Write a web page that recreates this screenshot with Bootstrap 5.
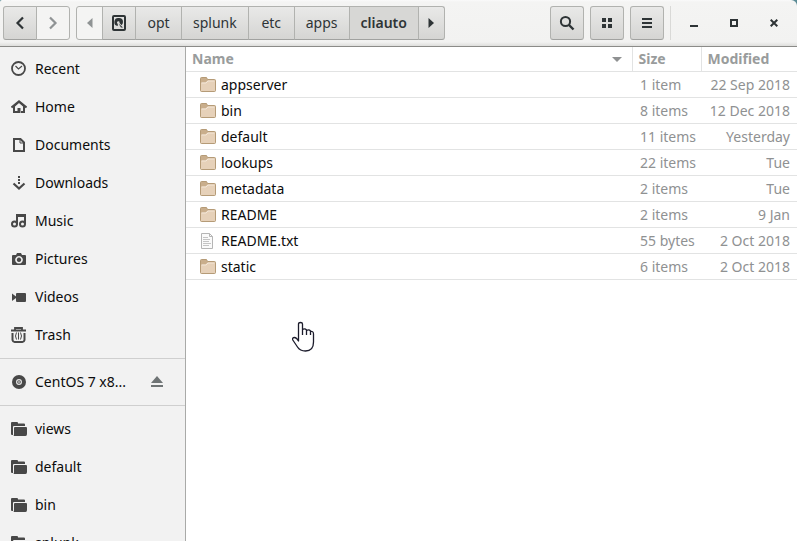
<!DOCTYPE html>
<html lang="en">
<head>
<meta charset="utf-8">
<meta name="viewport" content="width=device-width, initial-scale=1">
<title>cliauto</title>
<link href="https://cdn.jsdelivr.net/npm/bootstrap@5.3.0/dist/css/bootstrap.min.css" rel="stylesheet">
<style>
body { font-family: "Noto Sans", "Open Sans", sans-serif; font-size: 14px; line-height: 20px; color: #0c0c0c; background: #5a8b95; }
svg { display: block; flex: none; }
.titlebar { height: 47px; padding: 0 3px; color: #2e3436; background: linear-gradient(#fafafa, #f4f4f3 2px, #f2f2f1 42px, #dededc 46px); border-bottom: 1px solid #8b8b88; border-radius: 2px 6px 0 0; }
.tool { --bs-btn-padding-x: 0; --bs-btn-padding-y: 0; --bs-btn-font-size: 14px; --bs-btn-line-height: 20px; --bs-btn-border-radius: 3px; --bs-btn-border-color: #b1b2af; --bs-btn-color: #2e3436; --bs-btn-hover-color: #2e3436; --bs-btn-hover-border-color: #a1a2a0;
  display: flex; align-items: center; justify-content: center; height: 34px; width: 34px; background: linear-gradient(#e9e9e8, #d5d5d3); border-bottom-color: #a1a2a0; }
.tool.off { color: #8f9394; background: #f4f4f3; border-color: #b1b2af; opacity: 1; }
.tool.seg { width: auto; min-width: 47px; padding: 0 11px; }
.tool.arrow { width: 27px; }
.tool.here { background: #d7d7d5; font-weight: 600; }
.trail { margin-left: 6px; }
.actions { gap: 6px; }
.rule { width: 1px; height: 34px; margin-right: 3px; background: #d9d9d7; }
.win { width: 40px; height: 34px; border: 0; background: none; color: inherit; display: flex; align-items: center; justify-content: center; padding: 0; }
.places { width: 186px; background: #f2f2f2; border-right: 1px solid #a9aaa8; padding-top: 3px; }
.place { display: flex; align-items: center; gap: 8px; height: 38px; flex: none; padding: 0 22px 0 11px; color: inherit; text-decoration: none; }
.place svg { color: #484848; }
.eject { border: 0; background: none; padding: 0; width: 12px; }
.place .eject svg { color: #6f7475; }
.places hr { margin: 4px 0; border-top: 1px solid #cfcfcf; opacity: 1; flex: none; }
.files { --bs-table-bg: #fff; table-layout: fixed; margin: 0; }
.files th, .files td { height: 26px; padding: 2px 7px 0 8px; border-bottom: 1px solid #e2e3e3; color: #8f9192; vertical-align: middle; line-height: 20px; white-space: nowrap; }
.files th { height: 24px; padding: 1px 6px 0; color: #999c9c; border-right: 1px solid #e2e3e3; }
.files th:last-child { border-right: 0; }
.files td:first-child { color: #0c0c0c; padding-left: 14px; }
.entry { display: flex; align-items: center; gap: 5px; }
.size-col { width: 69px; }
.date-col { width: 96px; }
.hand { position: absolute; left: 106px; top: 274px; }
</style>
</head>
<body class="vh-100 d-flex flex-column overflow-hidden">
<svg width="0" height="0" class="position-absolute" aria-hidden="true">
  <symbol id="folder" viewBox="0 0 16 16">
    <path d="M.5 13.500V1.500Q.5.500 1.500.500H6.500L7.500 2.500H14.500Q15.500 2.500 15.500 3.500V13.500Q15.500 14.500 14.500 14.500H1.500Q.5 14.500.5 13.500Z" fill="#c9ae8c" stroke="#b59b77"/>
    <path d="M1 14V6.500Q1 5.500 2 5.500H5.500L7.500 3.500H15V14H1Z" fill="#e6d1b9"/>
    <path d="M1.500 6H6L8 4H14.500" fill="none" stroke="#f3e7d8"/>
  </symbol>
  <symbol id="bookmark" viewBox="0 0 16 14">
    <path d="M0 1Q0 0 1 0H6Q7 0 7 1V1.500H13Q14 1.500 14 2.500V4H3Q2 4 2 5V13H1Q0 13 0 12Z" fill="currentColor"/>
    <path d="M3 6Q3 5 4 5H15Q16 5 16 6V12Q16 14 14.500 14H2.500Q3 13.500 3 12Z" fill="currentColor"/>
  </symbol>
</svg>

<header class="titlebar d-flex align-items-center flex-shrink-0">
  <div class="btn-group" role="group" aria-label="History">
    <button type="button" class="btn tool" aria-label="Back"><svg width="16" height="16" viewBox="0 0 16 16" fill="none" stroke="currentColor" stroke-width="2.200"><path d="M11 2.500 5.500 8l5.500 5.500"/></svg></button>
    <button type="button" class="btn tool off" aria-label="Forward"><svg width="16" height="16" viewBox="0 0 16 16" fill="none" stroke="currentColor" stroke-width="2.200"><path d="M5 2.500 10.500 8 5 13.500"/></svg></button>
  </div>
  <nav class="btn-group trail" aria-label="Path">
    <button type="button" class="btn tool arrow off" aria-label="Scroll path left"><svg width="6" height="10" viewBox="0 0 6 10"><path d="M5.500 0v10L0 5z" fill="currentColor"/></svg></button>
    <button type="button" class="btn tool" aria-label="Disk"><svg width="14" height="16" viewBox="0 0 14 16"><rect x="1" y="1" width="12" height="14" rx="1" fill="none" stroke="currentColor" stroke-width="2"/><path fill="currentColor" d="M7 3a4 4 0 0 1 4 4q0 2-1.500 3.200L7.500 8a1.300 1.300 0 1 0-1.700.800V11A4 4 0 0 1 7 3zM6.500 8.500 11 12.500H9z"/></svg></button>
    <button type="button" class="btn tool seg">opt</button>
    <button type="button" class="btn tool seg">splunk</button>
    <button type="button" class="btn tool seg">etc</button>
    <button type="button" class="btn tool seg">apps</button>
    <button type="button" class="btn tool seg here" aria-current="page">cliauto</button>
    <button type="button" class="btn tool arrow" aria-label="Scroll path right"><svg width="6" height="10" viewBox="0 0 6 10"><path d="M.5 0v10L6 5z" fill="currentColor"/></svg></button>
  </nav>
  <div class="d-flex actions ms-auto">
    <button type="button" class="btn tool" aria-label="Search"><svg width="16" height="16" viewBox="0 0 16 16" fill="none" stroke="currentColor"><circle cx="6.500" cy="6.500" r="4.600" stroke-width="2"/><path d="m10 10 4.500 4.500" stroke-width="2.400"/></svg></button>
    <button type="button" class="btn tool" aria-label="Grid view"><svg width="10" height="10" viewBox="0 0 10 10" fill="currentColor"><path d="M0 0h4v4H0zM6 0h4v4H6zM0 6h4v4H0zM6 6h4v4H6z"/></svg></button>
    <button type="button" class="btn tool" aria-label="Menu"><svg width="10" height="10" viewBox="0 0 10 10" fill="currentColor"><path d="M0 0h10v2H0zM0 4h10v2H0zM0 8h10v2H0z"/></svg></button>
    <div class="rule"></div>
  </div>
  <div class="d-flex">
    <button type="button" class="win" aria-label="Minimize"><svg width="8" height="8" viewBox="0 0 8 8"><path d="M0 6h8v2H0z" fill="currentColor"/></svg></button>
    <button type="button" class="win" aria-label="Maximize"><svg width="8" height="8" viewBox="0 0 8 8"><path d="M1 1h6v6H1z" fill="none" stroke="currentColor" stroke-width="2"/></svg></button>
    <button type="button" class="win" aria-label="Close"><svg width="8" height="8" viewBox="0 0 8 8"><path d="m.7.7 6.600 6.600m0-6.600L.7 7.300" stroke="currentColor" stroke-width="2"/></svg></button>
  </div>
</header>

<div class="d-flex flex-grow-1 overflow-hidden">
  <nav class="places d-flex flex-column flex-shrink-0 overflow-hidden" aria-label="Places">
    <a class="place" href="#"><svg width="16" height="16" viewBox="0 0 16 16" fill="none" stroke="currentColor"><circle cx="7.500" cy="7.500" r="6.500" stroke-width="1.800"/><path d="M4.500 5 7.500 8l3.500-3" stroke-width="1.200"/></svg>Recent</a>
    <a class="place" href="#"><svg width="16" height="16" viewBox="0 0 16 16"><path d="M.5 8.500 8 2.300l7.500 6.200" fill="none" stroke="currentColor" stroke-width="2"/><path fill="currentColor" fill-rule="evenodd" d="M2 7 8 2l6 5v7H2zM4 7.500V12h2.500V9h3v5H10v-2h2V7.500L8 4z"/></svg>Home</a>
    <a class="place" href="#"><svg width="16" height="16" viewBox="0 0 16 16" fill="none" stroke="currentColor" stroke-width="2"><path d="M3 2h6.500L13 5.500V14H3z"/><path d="M9 2v4h4" stroke-width="1"/></svg>Documents</a>
    <a class="place" href="#"><svg width="16" height="16" viewBox="0 0 16 16"><path d="M7 1h2v2H7zM7 4h2v2H7zM7 7h2v2H7z" fill="currentColor"/><path d="m2.500 8.500 5.500 5 5.500-5" fill="none" stroke="currentColor" stroke-width="2.200"/></svg>Downloads</a>
    <a class="place" href="#"><svg width="16" height="16" viewBox="0 0 16 16" fill="none" stroke="currentColor" stroke-width="2"><circle cx="3.500" cy="11" r="2.500"/><circle cx="11.500" cy="11" r="2.500"/><path d="M6 11V2h8v9M6 3h8"/></svg>Music</a>
    <a class="place" href="#"><svg width="16" height="16" viewBox="0 0 16 16"><path fill="currentColor" fill-rule="evenodd" d="M1 5Q1 4 2 4h3l1-2h4l1 2h3q1 0 1 1v8q0 1-1 1H2q-1 0-1-1zM8 5a3.800 3.800 0 1 0 .01 0zM8 6.600a2.200 2.200 0 1 1-.01 0z"/></svg>Pictures</a>
    <a class="place" href="#"><svg width="16" height="16" viewBox="0 0 16 16" fill="currentColor"><path d="M1 4.500 5 7.500V9L1 12z"/><rect x="5" y="4" width="10" height="9" rx="1"/></svg>Videos</a>
    <a class="place" href="#"><svg width="16" height="16" viewBox="0 0 16 16" fill="none" stroke="currentColor"><path d="M0 3.500h15M4 3V1h7v2" stroke-width="1.800"/><path d="M1.500 6v7q.5 2 2 2h8q1.500 0 2-2V6" stroke-width="2"/><path d="M5.500 5.500q-2 3.500 0 7M9.500 5.500q2 3.500 0 7M7.500 5.500v7"/></svg>Trash</a>
    <hr>
    <div class="place"><svg width="16" height="16" viewBox="0 0 16 16"><circle cx="8" cy="8" r="7" fill="currentColor"/><circle cx="8" cy="8" r="2.400" fill="none" stroke="#e4e4e4" stroke-width="1.200"/><circle cx="8" cy="8" r="1" fill="#bbb"/></svg><a class="text-reset text-decoration-none" href="#">CentOS 7 x8...</a>
      <button type="button" class="eject ms-auto" aria-label="Eject"><svg width="12" height="12" viewBox="0 0 12 12" fill="currentColor"><path d="m6 0 6 7H0zM0 9h12v2H0z"/></svg></button></div>
    <hr>
    <a class="place" href="#"><svg width="16" height="14"><use href="#bookmark"/></svg>views</a>
    <a class="place" href="#"><svg width="16" height="14"><use href="#bookmark"/></svg>default</a>
    <a class="place" href="#"><svg width="16" height="14"><use href="#bookmark"/></svg>bin</a>
    <a class="place" href="#"><svg width="16" height="14"><use href="#bookmark"/></svg>splunk</a>
  </nav>

  <main class="flex-grow-1 bg-white position-relative overflow-hidden">
    <table class="table files">
      <colgroup><col><col class="size-col"><col class="date-col"></colgroup>
      <thead><tr>
        <th scope="col"><div class="d-flex align-items-center justify-content-between pe-1">Name<svg width="10" height="5" viewBox="0 0 10 5"><path d="M0 0h10L5 5z" fill="#8f9192"/></svg></div></th>
        <th scope="col">Size</th><th scope="col">Modified</th>
      </tr></thead>
      <tbody>
        <tr><td><div class="entry"><svg width="16" height="16"><use href="#folder"/></svg>appserver</div></td><td>1 item</td><td class="text-end">22 Sep 2018</td></tr>
        <tr><td><div class="entry"><svg width="16" height="16"><use href="#folder"/></svg>bin</div></td><td>8 items</td><td class="text-end">12 Dec 2018</td></tr>
        <tr><td><div class="entry"><svg width="16" height="16"><use href="#folder"/></svg>default</div></td><td>11 items</td><td class="text-end">Yesterday</td></tr>
        <tr><td><div class="entry"><svg width="16" height="16"><use href="#folder"/></svg>lookups</div></td><td>22 items</td><td class="text-end">Tue</td></tr>
        <tr><td><div class="entry"><svg width="16" height="16"><use href="#folder"/></svg>metadata</div></td><td>2 items</td><td class="text-end">Tue</td></tr>
        <tr><td><div class="entry"><svg width="16" height="16"><use href="#folder"/></svg>README</div></td><td>2 items</td><td class="text-end">9 Jan</td></tr>
        <tr><td><div class="entry"><svg width="16" height="16" viewBox="0 0 16 16" fill="none"><path d="M1.500.5h8l3 3v12h-11z" fill="#fafafa" stroke="#b5b5b5"/><path d="M9.500.5v3h3" stroke="#b5b5b5"/><path d="M3 4.500h5M3 6.500h7M3 8.500h6M3 10.500h8M3 12.500h6" stroke="#c4c4c4"/></svg>README.txt</div></td><td>55 bytes</td><td class="text-end">2 Oct 2018</td></tr>
        <tr><td><div class="entry"><svg width="16" height="16"><use href="#folder"/></svg>static</div></td><td>6 items</td><td class="text-end">2 Oct 2018</td></tr>
      </tbody>
    </table>
    <svg class="hand" width="23" height="31" viewBox="0 0 23 31" aria-hidden="true"><path d="M6.500 18.500V3Q6.500 1.500 8.500 1.500T10.500 3V14M10.500 8.500Q13 7 14.500 9V14M14.500 9.500Q17 8 18.500 10V14M18.500 10.500Q21.500 10 21.500 13V21Q21.500 30 13.500 30Q8 30 5.500 26L.8 19Q0 16.500 2.500 16.500Q4.500 16.500 6.500 20V18" fill="#fff" stroke="#1b1b2b" stroke-width="1.300" stroke-linejoin="round"/></svg>
  </main>
</div>
<script src="https://cdn.jsdelivr.net/npm/bootstrap@5.3.0/dist/js/bootstrap.bundle.min.js"></script>
</body>
</html>
